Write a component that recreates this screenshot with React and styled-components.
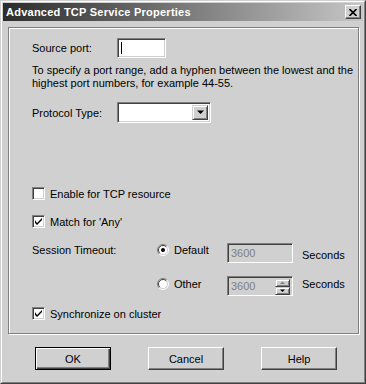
import React from 'react';
import styled, { createGlobalStyle } from 'styled-components';

const face = '#d0d0d0';
const shadow = '#808080';
const darkShadow = '#404040';

const GlobalStyle = createGlobalStyle`
  html, body {
    margin: 0;
    padding: 0;
    background: ${face};
  }
  * {
    box-sizing: border-box;
  }
`;

const Window = styled.div`
  width: 366px;
  height: 384px;
  border: 1px solid;
  border-color: ${face} ${darkShadow} ${darkShadow} ${face};
  background: ${face};
  font-family: 'Liberation Sans', Arial, sans-serif;
  font-size: 11px;
  color: #000;
`;

const Frame = styled.div`
  height: 100%;
  border: 1px solid;
  border-color: #fff ${shadow} ${shadow} #fff;
  padding: 1px;
  display: flex;
  flex-direction: column;
`;

const TitleBar = styled.div`
  height: 18px;
  display: flex;
  align-items: center;
  justify-content: space-between;
  padding: 0 2px 0 3px;
  background: linear-gradient(to right, #2c2c2c, #c6c6c6);
`;

const Title = styled.span`
  color: #fff;
  font-weight: bold;
  font-size: 11px;
  letter-spacing: 0.25px;
`;

const CloseButton = styled.div`
  width: 16px;
  height: 14px;
  background: ${face};
  border: 1px solid;
  border-color: #fff ${darkShadow} ${darkShadow} #fff;
  box-shadow: inset -1px -1px ${shadow};
  display: flex;
  align-items: center;
  justify-content: center;
`;

const Body = styled.div`
  padding: 6px 4px 0 5px;
  display: flex;
  flex-direction: column;
`;

const Group = styled.div`
  width: 351px;
  height: 307px;
  border: 1px solid ${shadow};
  box-shadow: inset 1px 1px #fff, 1px 1px #fff;
  padding: 10px 0 0 23px;
  display: flex;
  flex-direction: column;
`;

const Row = styled.div`
  display: flex;
  align-items: center;
  margin-top: ${p => p.top || 0}px;
`;

const Label = styled.span`
  width: ${p => p.width || 85}px;
  flex: none;
`;

const Sunken = styled.div`
  position: relative;
  width: ${p => p.width}px;
  height: ${p => p.height || 20}px;
  border: 1px solid;
  border-color: ${shadow} #fff #fff ${shadow};
  background: ${p => (p.disabled ? face : '#fff')};
  box-shadow: inset 1px 1px ${darkShadow}, inset -1px -1px ${face};
  display: flex;
  align-items: center;
  padding-left: 3px;
  color: ${p => (p.disabled ? shadow : '#000')};
`;

const Caret = styled.span`
  width: 1px;
  height: 12px;
  background: #000;
`;

const DropButton = styled.div`
  position: absolute;
  right: 2px;
  top: 2px;
  width: 16px;
  height: 15px;
  background: ${face};
  border: 1px solid;
  border-color: ${face} ${darkShadow} ${darkShadow} ${face};
  box-shadow: inset 1px 1px #fff, inset -1px -1px ${shadow};
  display: flex;
  align-items: center;
  justify-content: center;
`;

const SpinBox = styled.div`
  position: absolute;
  right: 2px;
  top: 2px;
  width: 15px;
  display: flex;
  flex-direction: column;
`;

const SpinHalf = styled.div`
  height: 8px;
  background: ${face};
  border: 1px solid;
  border-color: ${face} ${darkShadow} ${darkShadow} ${face};
  box-shadow: inset 1px 1px #fff, inset -1px -1px ${shadow};
  display: flex;
  align-items: center;
  justify-content: center;
`;

const HelpText = styled.p`
  margin: 6px 0 0;
  line-height: 13px;
  width: 326px;
`;

const CheckRow = styled.label`
  display: flex;
  align-items: center;
  gap: 5px;
  margin-top: ${p => p.top}px;
  height: 13px;
`;

const CheckBox = styled.span`
  width: 13px;
  height: 13px;
  flex: none;
  border: 1px solid;
  border-color: ${shadow} #fff #fff ${shadow};
  background: #fff;
  box-shadow: inset 1px 1px ${darkShadow}, inset -1px -1px ${face};
  display: flex;
  align-items: center;
  justify-content: center;
`;

const SessionGrid = styled.div`
  display: grid;
  grid-template-columns: 125px 70px 66px auto;
  grid-template-rows: 20px 20px;
  row-gap: 13px;
  margin-top: 15px;
  align-items: center;
`;

const GridLabel = styled.span`
  align-self: start;
  line-height: 13px;
  padding-top: 1px;
`;

const RadioRow = styled.span`
  display: flex;
  align-items: center;
  gap: 5px;
  align-self: ${p => p.align || 'center'};
  margin-top: ${p => p.offset || 0}px;
`;

const Units = styled.span`
  padding-left: 9px;
  margin-top: ${p => p.offset || 0}px;
`;

const ButtonRow = styled.div`
  display: flex;
  gap: 37px;
  margin: 13px 0 0 27px;
`;

const Button = styled.div`
  width: 76px;
  height: 23px;
  display: flex;
  align-items: center;
  justify-content: center;
  background: ${face};
  border: 1px solid;
  border-color: ${p => (p.primary ? '#000' : `#fff ${darkShadow} ${darkShadow} #fff`)};
  box-shadow: ${p =>
    p.primary
      ? `inset 1px 1px #fff, inset -1px -1px ${darkShadow}, inset -2px -2px ${shadow}`
      : `inset -1px -1px ${shadow}`};
`;

const Check = () => (
  <svg width="7" height="7" viewBox="0 0 7 7">
    <path d="M0 2 L0 5 L2 7 L7 2 L7 0 L2 5 Z" fill="#000" />
  </svg>
);

const Radio = ({ checked }) => (
  <svg width="12" height="12" viewBox="0 0 12 12">
    <circle cx="6" cy="6" r="5" fill="#fff" />
    <path d="M2.1 9.9 A5.5 5.5 0 0 1 9.9 2.1" stroke={shadow} fill="none" />
    <path d="M9.9 2.1 A5.5 5.5 0 0 1 2.1 9.9" stroke="#fff" fill="none" />
    <path d="M2.8 9.2 A4.5 4.5 0 0 1 9.2 2.8" stroke={darkShadow} fill="none" />
    <path d="M9.2 2.8 A4.5 4.5 0 0 1 2.8 9.2" stroke={face} fill="none" />
    {checked && <circle cx="6" cy="6" r="2" fill="#000" />}
  </svg>
);

const Arrow = ({ up, size = 7 }) => (
  <svg width={size} height={Math.ceil(size / 2) + 1} viewBox={`0 0 ${size} ${Math.ceil(size / 2)}`}>
    <polygon
      points={up ? `${size / 2},0 ${size},${size / 2} 0,${size / 2}` : `0,0 ${size},0 ${size / 2},${size / 2}`}
      fill={up ? shadow : '#000'}
    />
  </svg>
);

const CloseGlyph = () => (
  <svg width="8" height="7" viewBox="0 0 8 7">
    <path d="M0.5 0 L7.5 7 M7.5 0 L0.5 7" stroke="#000" strokeWidth="1.6" />
  </svg>
);

export default function App() {
  return (
    <>
      <GlobalStyle />
      <Window>
        <Frame>
          <TitleBar>
            <Title>Advanced TCP Service Properties</Title>
            <CloseButton><CloseGlyph /></CloseButton>
          </TitleBar>
          <Body>
            <Group>
              <Row>
                <Label>Source port:</Label>
                <Sunken width={49}><Caret /></Sunken>
              </Row>
              <HelpText>
                To specify a port range, add a hyphen between the lowest and the highest port numbers, for example 44-55.
              </HelpText>
              <Row top={12}>
                <Label>Protocol Type:</Label>
                <Sunken width={94} height={21}>
                  <DropButton><Arrow /></DropButton>
                </Sunken>
              </Row>
              <CheckRow top={64}>
                <CheckBox />
                Enable for TCP resource
              </CheckRow>
              <CheckRow top={15}>
                <CheckBox><Check /></CheckBox>
                Match for 'Any'
              </CheckRow>
              <SessionGrid>
                <GridLabel>Session Timeout:</GridLabel>
                <RadioRow align="start" offset={1}><Radio checked />Default</RadioRow>
                <Sunken width={66} disabled>3600</Sunken>
                <Units offset={4}>Seconds</Units>
                <span />
                <RadioRow offset={-5}><Radio />Other</RadioRow>
                <Sunken width={66} disabled>
                  3600
                  <SpinBox>
                    <SpinHalf><Arrow up size={5} /></SpinHalf>
                    <SpinHalf><Arrow up={false} size={5} /></SpinHalf>
                  </SpinBox>
                </Sunken>
                <Units offset={-5}>Seconds</Units>
              </SessionGrid>
              <CheckRow top={11}>
                <CheckBox><Check /></CheckBox>
                Synchronize on cluster
              </CheckRow>
            </Group>
            <ButtonRow>
              <Button primary>OK</Button>
              <Button>Cancel</Button>
              <Button>Help</Button>
            </ButtonRow>
          </Body>
        </Frame>
      </Window>
    </>
  );
}
